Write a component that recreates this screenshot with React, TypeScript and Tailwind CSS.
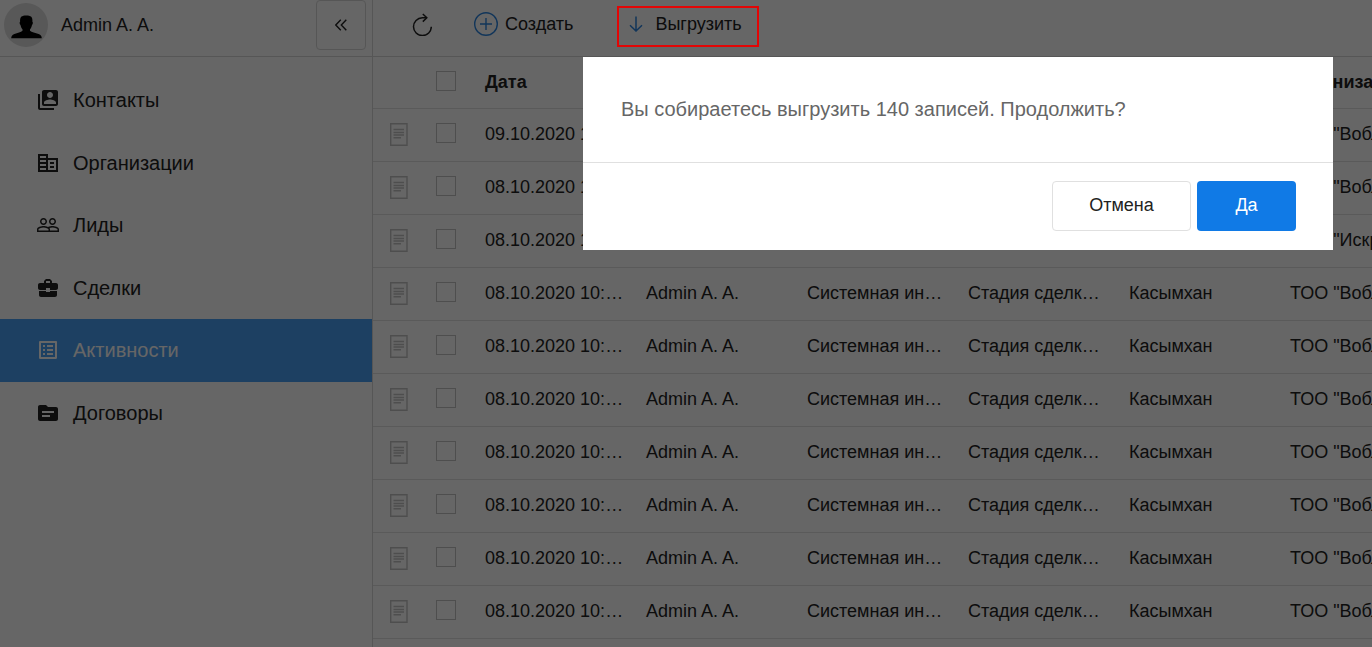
import React from 'react';
import {
  MdSwitchAccount,
  MdCorporateFare,
  MdPeopleOutline,
  MdBusinessCenter,
  MdListAlt,
  MdSource,
} from 'react-icons/md';

const navItems = [
  { label: 'Контакты', Icon: MdSwitchAccount },
  { label: 'Организации', Icon: MdCorporateFare },
  { label: 'Лиды', Icon: MdPeopleOutline },
  { label: 'Сделки', Icon: MdBusinessCenter },
  { label: 'Активности', Icon: MdListAlt, active: true },
  { label: 'Договоры', Icon: MdSource },
];

const columns = ['Дата', 'Ответственный', 'Тип', 'Стадия', 'Контакт', 'Организация'];

const rows = [
  ['09.10.2020 10:15', 'ТОО "Вобла"'],
  ['08.10.2020 10:15', 'ТОО "Вобла"'],
  ['08.10.2020 10:15', 'ТОО "Искра"'],
  ...Array.from({ length: 7 }, () => ['08.10.2020 10:15', 'ТОО "Вобла"']),
].map(([date, company]) => [
  date,
  'Admin A. A.',
  'Системная информация',
  'Стадия сделки изменена',
  'Касымхан',
  company,
]);

function Avatar() {
  return (
    <svg viewBox="0 0 44 44" className="size-11 shrink-0" aria-hidden="true">
      <circle cx="22" cy="22" r="22" fill="#dcdcdc" />
      <path
        d="M17.500 13.500c1.500-1.500 8-1.500 9.500 0 1.300 1.200 1.600 3 1.400 5.300.8.300.5 2.700-.4 3.200-.4 2-1 3.200-2 4.200v1.600c1.500 1.700 5.500 2 8.600 3.200 2.400.9 3 2.200 3.200 4.200H7.200c.2-2 .8-3.300 3.200-4.200 3.100-1.200 6.600-1.500 8.100-3.200v-1.600c-1-1-1.600-2.200-2-4.200-.9-.5-1.200-2.900-.4-3.200-.2-2.300.1-4.100 1.400-5.300z"
        fill="#000"
      />
    </svg>
  );
}

function Checkbox({ label }: { label: string }) {
  return (
    <input
      type="checkbox"
      aria-label={label}
      className="block size-5 appearance-none border border-[#c4c4c4] bg-white"
    />
  );
}

function NoteIcon() {
  return (
    <svg viewBox="0 0 18 23" className="h-[23px] w-[18px]" fill="none" stroke="#c4c4c4" strokeWidth="1.400" aria-hidden="true">
      <path d="M.7.7h16.300v21.500H.7z" />
      <path d="M3.500 6.500h10.500M3.500 9.500h10.500M3.500 12h10.500M3.500 14.800h7.500" />
    </svg>
  );
}

export default function App() {
  return (
    <div className="flex min-h-screen overflow-hidden bg-white font-['Liberation_Sans',Arial,sans-serif] text-[#222]">
      <aside className="w-[373px] shrink-0 border-r border-[#d8d8d8]">
        <div className="flex h-[57px] items-start justify-between border-b border-[#d8d8d8] pr-[6px] pl-1">
          <div className="flex h-[50px] items-center gap-[13px]">
            <Avatar />
            <span className="text-lg">Admin A. A.</span>
          </div>
          <button
            type="button"
            aria-label="Свернуть меню"
            className="flex size-[50px] items-center justify-center rounded border border-[#d8d8d8]"
          >
            <svg viewBox="0 0 12 12" className="size-3" fill="none" stroke="currentColor" strokeWidth="1.400" aria-hidden="true">
              <path d="M5.800.8.800 6l5 5.200M11.300.8l-5 5.200 5 5.200" />
            </svg>
          </button>
        </div>
        <nav className="pt-3">
          <ul className="grid h-[375px] grid-rows-6">
            {navItems.map(({ label, Icon, active }) => (
              <li key={label}>
                <a
                  href="#"
                  className={
                    active
                      ? 'flex h-full items-center gap-[13px] bg-[#4aa0f5] pl-9 text-xl text-white'
                      : 'flex h-full items-center gap-[13px] pl-9 text-xl'
                  }
                >
                  <Icon className="size-6" aria-hidden="true" />
                  {label}
                </a>
              </li>
            ))}
          </ul>
        </nav>
      </aside>

      <main className="min-w-0 flex-1 overflow-hidden">
        <div className="flex h-[57px] items-start border-b border-[#d8d8d8] pl-[39px] text-lg">
          <button type="button" aria-label="Обновить" className="flex h-12 items-center">
            <svg viewBox="0 0 20 24" className="h-6 w-5" fill="none" stroke="currentColor" strokeWidth="1.500" aria-hidden="true">
              <path d="M14.500 5.800H10.300a8.900 8.900 0 1 0 9 8.900" />
              <path d="m10.800 2 4 3.800-4 3.800" />
            </svg>
          </button>
          <button type="button" className="ml-[42px] flex h-12 items-center gap-[7px]">
            <svg viewBox="0 0 24 24" className="size-6" fill="none" stroke="#2d86e0" strokeWidth="1.400" aria-hidden="true">
              <circle cx="12" cy="12" r="11.300" />
              <path d="M12 6v12M6 12h12" />
            </svg>
            Создать
          </button>
          <button type="button" className="relative ml-14 flex h-12 items-center gap-3">
            <svg viewBox="0 0 14 16" className="h-4 w-[14px]" fill="none" stroke="#2d86e0" strokeWidth="1.500" aria-hidden="true">
              <path d="M7 .5v14.500M1 9.300l6 5.700 6-5.700" />
            </svg>
            Выгрузить
            <span className="absolute top-[6px] -right-[17px] bottom-[1px] -left-3 z-20 border-2 border-[#e30505]" />
          </button>
        </div>

        <table className="w-[1065px] table-fixed border-collapse text-left text-lg">
          <colgroup>
            <col className="w-[51px]" />
            <col className="w-[49px]" />
            {columns.map((c) => (
              <col key={c} className="w-[161px]" />
            ))}
          </colgroup>
          <thead>
            <tr className="h-[51px] border-b border-[#e0e0e0]">
              <td />
              <th className="p-0 pb-[2px] pl-3">
                <Checkbox label="Выбрать все" />
              </th>
              {columns.map((c) => (
                <th key={c} className="truncate py-0 pr-[10px] pl-3 font-bold">
                  {c}
                </th>
              ))}
            </tr>
          </thead>
          <tbody>
            {rows.map((row, i) => (
              <tr key={i} className="h-[53px] border-b border-[#e0e0e0]">
                <td className="p-0 pl-[17px]">
                  <NoteIcon />
                </td>
                <td className="p-0 pb-[4px] pl-3">
                  <Checkbox label={`Выбрать запись ${i + 1}`} />
                </td>
                {row.map((cell, j) => (
                  <td key={j} className="truncate py-0 pr-[10px] pb-[2px] pl-3">
                    {cell}
                  </td>
                ))}
              </tr>
            ))}
          </tbody>
        </table>
      </main>

      <div className="fixed inset-0 z-10 bg-black/60 pt-[57px] pr-[39px]">
        <div role="dialog" aria-modal="true" aria-labelledby="export-message" className="ml-auto w-[750px] bg-white">
          <p id="export-message" className="border-b border-[#e0e0e0] px-[38px] py-[38px] text-xl leading-[29px] text-[#666]">
            Вы собираетесь выгрузить 140 записей. Продолжить?
          </p>
          <div className="flex justify-end gap-[6px] pt-[18px] pr-[37px] pb-[19px] text-lg">
            <button type="button" className="h-[50px] w-[139px] rounded border border-[#e0e0e0] bg-white pb-[2px]">
              Отмена
            </button>
            <button type="button" className="h-[50px] w-[99px] rounded bg-[#107ae6] pb-[2px] text-white">
              Да
            </button>
          </div>
        </div>
      </div>
    </div>
  );
}
